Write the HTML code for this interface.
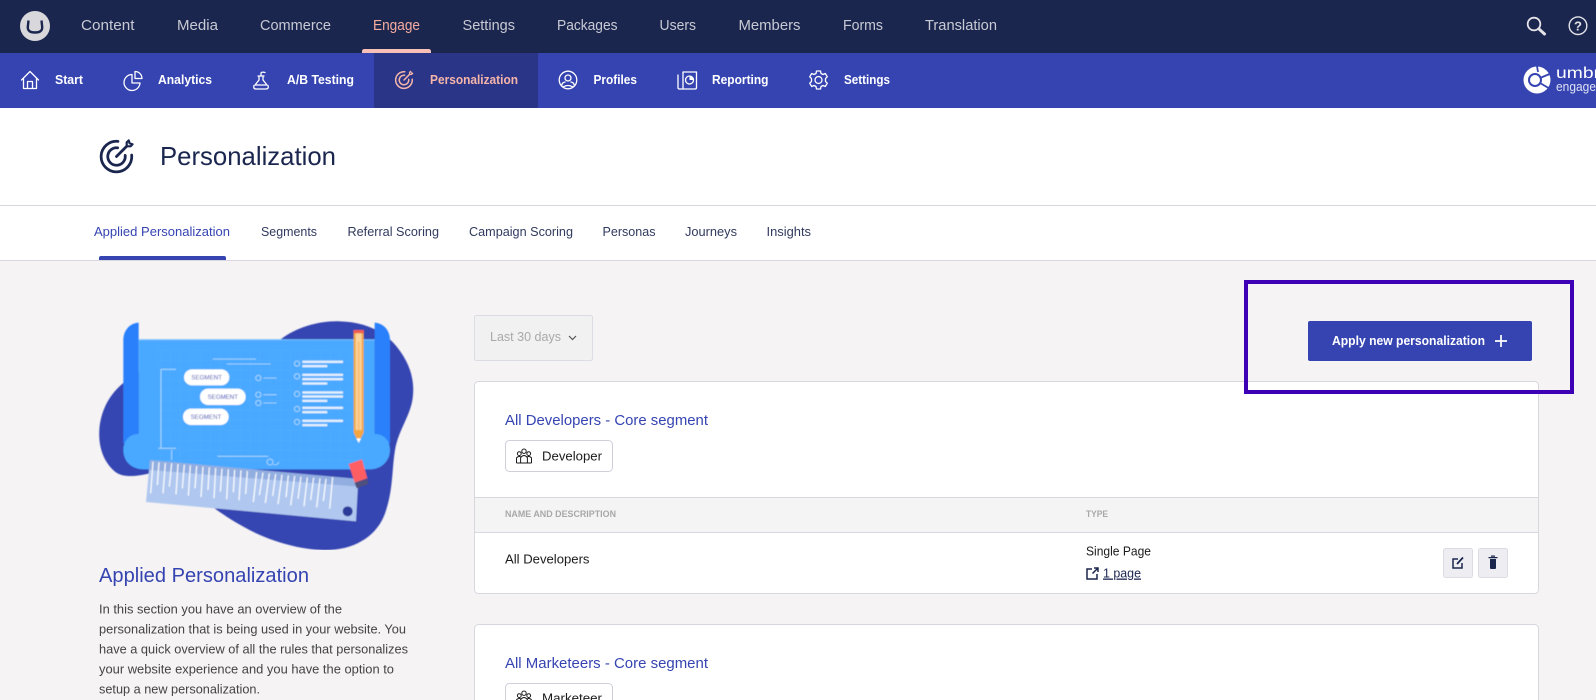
<!DOCTYPE html>
<html lang="en"><head><meta charset="utf-8"><title>Personalization</title>
<style>
html,body{margin:0;padding:0;width:1596px;height:700px;overflow:hidden;background:#f5f3f4}
svg{display:block}
text{font-family:"Liberation Sans",sans-serif}
.t{font-size:15px;fill:#c8cad3}
.s{font-size:13px;font-weight:700;fill:#fff}
.tab{font-size:13px;fill:#303a5e}
.p{font-size:13px;fill:#444}
.i{fill:none;stroke:#fff;stroke-width:1.300;stroke-linecap:round;stroke-linejoin:round}
</style></head><body>
<svg width="1596" height="700" viewBox="0 0 1596 700" xmlns="http://www.w3.org/2000/svg">
<defs>
<symbol id="target" viewBox="0 0 24 24"><g fill="none" stroke="currentColor" stroke-width="1.900" stroke-linecap="round" stroke-linejoin="round"><path d="M13 1.600A10.500 10.500 0 1 0 22.400 11"/><path d="M12.800 6.050A6 6 0 1 0 17.950 11.200"/><path d="M12 12 19 5"/><path d="M19 5V2.300L20.400 1 21 3 23 3.600 21.700 5Z" stroke-width="1.500"/></g></symbol>
<symbol id="people" viewBox="0 0 16 16"><g fill="none" stroke="#1b1b1b" stroke-width="1"><circle cx="8" cy="3.200" r="2.200"/><circle cx="3.300" cy="5.600" r="1.900"/><circle cx="12.700" cy="5.600" r="1.900"/><path d="M4.600 15V9.500Q8 5.500 11.400 9.500V15"/><path d="M.5 15V10Q1.500 8 4.600 8.600M15.500 15V10Q14.500 8 11.400 8.600M.5 15H15.500"/></g></symbol>
<pattern id="grid" width="30" height="30" patternUnits="userSpaceOnUse"><path d="M30 0H0V30" fill="none" stroke="#fff" stroke-opacity=".08" stroke-width="2"/></pattern>
<filter id="soft" x="-2%" y="-2%" width="104%" height="104%"><feGaussianBlur stdDeviation="1.500"/></filter>
</defs>

<!-- top nav -->
<rect width="1596" height="53" fill="#1b264f"/>
<circle cx="35" cy="26" r="15" fill="#d8d7dc"/>
<path d="M28.500 20.500 27.800 27Q27.500 32.500 35 32.500T42.200 27L41.500 20.500" fill="none" stroke="#1b264f" stroke-width="2.400"/>
<text class="t" x="81" y="30" textLength="53.500" lengthAdjust="spacingAndGlyphs">Content</text>
<text class="t" x="177" y="30" textLength="41" lengthAdjust="spacingAndGlyphs">Media</text>
<text class="t" x="260" y="30" textLength="71" lengthAdjust="spacingAndGlyphs">Commerce</text>
<text class="t" x="373" y="30" textLength="47" lengthAdjust="spacingAndGlyphs" style="fill:#f6ac9f">Engage</text>
<text class="t" x="462.500" y="30" textLength="52.500" lengthAdjust="spacingAndGlyphs">Settings</text>
<text class="t" x="557" y="30" textLength="60.500" lengthAdjust="spacingAndGlyphs">Packages</text>
<text class="t" x="659.500" y="30" textLength="36.500" lengthAdjust="spacingAndGlyphs">Users</text>
<text class="t" x="738.500" y="30" textLength="62" lengthAdjust="spacingAndGlyphs">Members</text>
<text class="t" x="843" y="30" textLength="40" lengthAdjust="spacingAndGlyphs">Forms</text>
<text class="t" x="925" y="30" textLength="72" lengthAdjust="spacingAndGlyphs">Translation</text>
<path d="M362 53V51.500Q362 49 364.500 49H428.500Q431 49 431 51.500V53Z" fill="#f9c0b8"/>
<g fill="none" stroke="#e3e3e8"><circle cx="1534" cy="24" r="6.300" stroke-width="1.800"/><path d="M1538.800 28.800 1544.500 34" stroke-width="3" stroke-linecap="round"/><circle cx="1578" cy="25.700" r="8.800" stroke-width="1.400"/></g>
<text x="1578" y="30.500" text-anchor="middle" style="font-size:13px;font-weight:700;fill:#e3e3e8">?</text>

<!-- sub nav -->
<rect y="53" width="1596" height="55" fill="#3544b1"/>
<rect x="374" y="53" width="164" height="55" fill="#2a3587"/>
<path class="i" d="M21.500 80 30 71.500 38.500 80M23.500 78.500V88.500H36.500V78.500M27.500 88.500V81.500H32.500V88.500"/>
<text class="s" x="55" y="84" textLength="28" lengthAdjust="spacingAndGlyphs">Start</text>
<path class="i" d="M132 74.500A8 8 0 1 0 140 83H132ZM135 71.500A7 7 0 0 1 142 78.500H135Z"/>
<text class="s" x="158" y="84" textLength="54" lengthAdjust="spacingAndGlyphs">Analytics</text>
<path class="i" d="M258 76H264M259 76V80L255 85H267L263 80V76M254 85.500Q253 89 256 89H266Q269 89 268 85.500M261 76V73Q262 71.500 265 72.500"/>
<text class="s" x="287" y="84" textLength="67" lengthAdjust="spacingAndGlyphs">A/B Testing</text>
<g color="#f6b5aa"><use href="#target" x="394.500" y="70.500" width="19" height="19" /></g>
<text class="s" x="430" y="84" textLength="88" lengthAdjust="spacingAndGlyphs" style="fill:#f6b5aa">Personalization</text>
<g class="i"><circle cx="568" cy="80" r="8.800"/><circle cx="568" cy="78" r="3"/><path d="M561.500 86Q562 82.500 565 82M574.500 86Q574 82.500 571 82M563 87Q568 84 573 87"/></g>
<text class="s" x="593.500" y="84" textLength="43.500" lengthAdjust="spacingAndGlyphs">Profiles</text>
<g class="i"><path d="M678 75V87.500Q678 89 679.500 89H695Q696.500 89 696.500 87.500V72H683V88"/><circle cx="689.500" cy="80" r="4"/></g>
<path d="M689.500 76V80H693.500A4 4 0 0 0 689.500 76Z" fill="#fff"/>
<text class="s" x="712" y="84" textLength="56.500" lengthAdjust="spacingAndGlyphs">Reporting</text>
<g class="i"><circle cx="818.500" cy="80" r="3.500"/><path d="M816.500 71H820.500L821 73.500 823 74.500 825.300 73.500 827.300 76.800 825.500 78.500V81.500L827.300 83.200 825.300 86.500 823 85.500 821 86.500 820.500 89H816.500L816 86.500 814 85.500 811.700 86.500 809.700 83.200 811.500 81.500V78.500L809.700 76.800 811.700 73.500 814 74.500 816 73.500Z"/></g>
<text class="s" x="844" y="84" textLength="46" lengthAdjust="spacingAndGlyphs">Settings</text>
<circle cx="1537" cy="80" r="13.500" fill="#fff"/>
<circle cx="1535" cy="80" r="6" fill="none" stroke="#3544b1" stroke-width="2"/>
<path d="M1540 78 1552 73M1540 83 1552 90M1537 66 1538 72" stroke="#3544b1" stroke-width="1.800"/>
<text x="1556" y="78" textLength="44" lengthAdjust="spacingAndGlyphs" style="font-size:16px;fill:#fff">umbr</text>
<text x="1556" y="91" textLength="40" lengthAdjust="spacingAndGlyphs" style="font-size:13px;fill:#dfe2f5">engage</text>

<!-- page header -->
<rect y="108" width="1596" height="97" fill="#fff"/>
<rect y="205" width="1596" height="1" fill="#d8d7e0"/>
<use href="#target" x="99" y="139" width="35" height="35" style="color:#1b264f"/>
<text x="160" y="165" textLength="176" lengthAdjust="spacingAndGlyphs" style="font-size:26px;fill:#1b264f">Personalization</text>

<!-- tabs -->
<rect y="206" width="1596" height="54" fill="#fff"/>
<rect y="260" width="1596" height="1" fill="#d8d7e0"/>
<text class="tab" x="94" y="236" textLength="136" lengthAdjust="spacingAndGlyphs" style="fill:#3544b1">Applied Personalization</text>
<text class="tab" x="261" y="236" textLength="56" lengthAdjust="spacingAndGlyphs">Segments</text>
<text class="tab" x="347.500" y="236" textLength="91.500" lengthAdjust="spacingAndGlyphs">Referral Scoring</text>
<text class="tab" x="469" y="236" textLength="104" lengthAdjust="spacingAndGlyphs">Campaign Scoring</text>
<text class="tab" x="602.500" y="236" textLength="53" lengthAdjust="spacingAndGlyphs">Personas</text>
<text class="tab" x="685" y="236" textLength="52" lengthAdjust="spacingAndGlyphs">Journeys</text>
<text class="tab" x="766.500" y="236" textLength="44.500" lengthAdjust="spacingAndGlyphs">Insights</text>
<path d="M99 260V258Q99 256 101 256H224Q226 256 226 258V260Z" fill="#3544b1"/>

<!-- illustration -->
<svg x="80" y="310" width="350" height="240" viewBox="0 0 1050 720">
<g filter="url(#soft)">
<path fill="#3544b1" d="M600 90C650 50 720 32 780 34C850 36 910 60 950 110C990 160 1005 210 998 265C990 320 955 360 945 420C935 480 940 540 915 610C890 680 820 722 730 720C650 718 560 690 490 650C440 622 410 600 370 570L210 490C170 498 130 505 105 485C70 455 55 410 58 360C62 300 90 250 135 215L300 100Z"/>
<path fill="#2a80fb" d="M176 38C150 40 130 60 130 90V400H176ZM884 38C910 40 930 60 930 90V400H884Z"/>
<rect x="176" y="88" width="708" height="300" fill="#4aa8ff"/>
<rect x="176" y="88" width="708" height="3" fill="#7cc2ff"/>
<path fill="#4aa8ff" d="M176 372H884C912 372 930 392 930 420C930 452 905 478 870 478H190C155 478 130 455 130 420C130 392 148 372 176 372Z"/>
<rect x="228" y="112" width="625" height="345" fill="url(#grid)"/>
<g stroke="#dff0ff" stroke-opacity=".75" stroke-width="2.500" fill="none">
<path d="M398 147H528M440 162H572M243 178V414M243 178H288M235 415H288M275 420V450M412 439H565M550 204H590M550 254H590M550 279H590"/>
<circle cx="535" cy="204" r="8"/><circle cx="535" cy="254" r="8"/><circle cx="535" cy="279" r="8"/><circle cx="651" cy="161" r="8"/><circle cx="651" cy="199" r="8"/><circle cx="651" cy="252" r="8"/><circle cx="651" cy="297" r="8"/><circle cx="651" cy="336" r="8"/><circle cx="570" cy="456" r="9"/><path d="M580 465Q595 465 596 456"/>
</g>
<g fill="#e6f0fd"><rect x="667" y="152" width="122" height="7"/><rect x="667" y="165" width="75" height="7"/><rect x="667" y="191" width="122" height="7"/><rect x="667" y="204" width="122" height="7"/><rect x="667" y="217" width="75" height="7"/><rect x="667" y="244" width="122" height="7"/><rect x="667" y="256" width="122" height="7"/><rect x="667" y="269" width="75" height="7"/><rect x="667" y="290" width="122" height="7"/><rect x="667" y="303" width="75" height="7"/><rect x="667" y="329" width="122" height="7"/><rect x="667" y="342" width="75" height="7"/></g>
<g fill="#fff"><rect x="312" y="178" width="136" height="48" rx="24"/><rect x="360" y="236" width="137" height="49" rx="24"/><rect x="309" y="296" width="137" height="49" rx="24"/></g>
<g fill="#3544b1" style="font-size:19px"><text x="334" y="208" textLength="92" lengthAdjust="spacingAndGlyphs">SEGMENT</text><text x="383" y="267" textLength="91" lengthAdjust="spacingAndGlyphs">SEGMENT</text><text x="332" y="327" textLength="92" lengthAdjust="spacingAndGlyphs">SEGMENT</text></g>
<path fill="#f4a63f" d="M821 60H851V368L836 398 821 368Z"/>
<rect x="821" y="60" width="30" height="10" fill="#f05d50"/>
<rect x="827" y="70" width="18" height="290" fill="#fbd29a"/>
<rect x="834" y="95" width="4" height="265" fill="#f4a63f" opacity=".6"/>
<path fill="#fff" d="M829 385H843L836 399Z"/>
<path fill="#b0c8f0" d="M210 450 835 507 828 634 198 576Z"/>
<path fill="#86a3d8" d="M210 450 835 507 833 530 208 480Z" opacity=".7"/>
<g stroke="#fff" stroke-width="3.500"><path d="M219 455 212 550M237 457 232 525M256 459 249 550M275 460 268 530M294 462 288 553M313 464 307 535M331 466 325 557M350 468 345 535M369 470 363 561M388 472 384 540M407 474 402 565M426 476 421 545M445 478 440 568M464 480 460 547M483 481 477 571M502 483 497 552M530 486 520 576M549 488 538 555M568 490 556 579M587 492 578 558M606 494 594 583M625 496 618 562M644 498 632 586M663 500 654 566M682 502 672 589M701 503 692 570M720 505 710 592M738 507 730 573M758 502 749 596"/></g>
<circle cx="803" cy="604" r="15" fill="#2c3a99"/>
<path fill="#ff5f63" d="M806 462 846 448 862 505 824 518Z"/>
<path fill="#4e4f7e" d="M824 518 861 505 866 522 830 535Z"/>
</g>
</svg>

<!-- left copy -->
<text x="99" y="582" textLength="210" lengthAdjust="spacingAndGlyphs" style="font-size:20px;fill:#3544b1">Applied Personalization</text>
<text class="p" x="99" y="613.500" textLength="243" lengthAdjust="spacingAndGlyphs">In this section you have an overview of the</text>
<text class="p" x="99" y="633.500" textLength="307" lengthAdjust="spacingAndGlyphs">personalization that is being used in your website. You</text>
<text class="p" x="99" y="653.500" textLength="309" lengthAdjust="spacingAndGlyphs">have a quick overview of all the rules that personalizes</text>
<text class="p" x="99" y="673.500" textLength="295" lengthAdjust="spacingAndGlyphs">your website experience and you have the option to</text>
<text class="p" x="99" y="693.500" textLength="161" lengthAdjust="spacingAndGlyphs">setup a new personalization.</text>

<!-- filter -->
<rect x="474.500" y="315.500" width="118" height="45" rx="2" fill="#f1f1f2" stroke="#dcdce3"/>
<text x="490" y="341" textLength="71" lengthAdjust="spacingAndGlyphs" style="font-size:13px;fill:#a9a9a9">Last 30 days</text>
<path d="M569 336 572.500 339.500 576 336" fill="none" stroke="#555" stroke-width="1.200"/>

<!-- button -->
<rect x="1308" y="321" width="224" height="40" rx="2" fill="#3544b1"/>
<text class="s" x="1332" y="345" textLength="153" lengthAdjust="spacingAndGlyphs">Apply new personalization</text>
<path d="M1501 335V347M1495 341H1507" stroke="#fff" stroke-width="1.700"/>

<!-- card 1 -->
<rect x="474.500" y="381.500" width="1064" height="212" rx="4" fill="#fff" stroke="#d8d7e0"/>
<text x="505" y="425" textLength="203" lengthAdjust="spacingAndGlyphs" style="font-size:15px;fill:#3544b1">All Developers - Core segment</text>
<rect x="505.500" y="440.500" width="107" height="31" rx="4" fill="#fff" stroke="#cfd0da"/>
<use href="#people" x="516" y="448" width="16" height="16"/>
<text x="542" y="460.500" textLength="60" lengthAdjust="spacingAndGlyphs" style="font-size:13px;fill:#1b1b1b">Developer</text>
<rect x="475" y="497" width="1063" height="35" fill="#f5f4f5"/>
<path d="M475 497.500H1538M475 532.500H1538" stroke="#d8d7e0"/>
<text x="505" y="517" textLength="111" lengthAdjust="spacingAndGlyphs" style="font-size:9.500px;font-weight:700;fill:#a8a8a8">NAME AND DESCRIPTION</text>
<text x="1086" y="517" textLength="22" lengthAdjust="spacingAndGlyphs" style="font-size:9.500px;font-weight:700;fill:#a8a8a8">TYPE</text>
<text x="505" y="563.500" textLength="84.500" lengthAdjust="spacingAndGlyphs" style="font-size:13px;fill:#1b1b1b">All Developers</text>
<text x="1086" y="555.500" textLength="65" lengthAdjust="spacingAndGlyphs" style="font-size:13px;fill:#1b1b1b">Single Page</text>
<path d="M1092 569H1087V579H1097V574M1092.500 573.500 1097.500 568.500M1094 568H1098V572" fill="none" stroke="#1b264f" stroke-width="1.500"/>
<text x="1103" y="577.500" textLength="38" lengthAdjust="spacingAndGlyphs" style="font-size:13px;fill:#1b264f;text-decoration:underline">1 page</text>
<rect x="1443.500" y="548.500" width="29" height="29" rx="2" fill="#eeeef2" stroke="#dcdce3"/>
<rect x="1478.500" y="548.500" width="29" height="29" rx="2" fill="#eeeef2" stroke="#dcdce3"/>
<path d="M1458 559H1453V568H1462V563" fill="none" stroke="#1b264f" stroke-width="1.500"/>
<path d="M1457 564 1463 557.500" stroke="#1b264f" stroke-width="1.800"/>
<path d="M1490 559H1496V568Q1496 569 1495 569H1491Q1490 569 1490 568ZM1488.500 557H1497.500V558.300H1488.500ZM1491 555.500H1495V556.800H1491Z" fill="#1b264f"/>

<!-- card 2 -->
<rect x="474.500" y="624.500" width="1064" height="120" rx="4" fill="#fff" stroke="#d8d7e0"/>
<text x="505" y="668" textLength="203" lengthAdjust="spacingAndGlyphs" style="font-size:15px;fill:#3544b1">All Marketeers - Core segment</text>
<rect x="505.500" y="683.500" width="107" height="31" rx="4" fill="#fff" stroke="#cfd0da"/>
<use href="#people" x="516" y="690" width="16" height="16"/>
<text x="542" y="702.500" textLength="60" lengthAdjust="spacingAndGlyphs" style="font-size:13px;fill:#1b1b1b">Marketeer</text>

<!-- annotation -->
<path d="M1572 282H1246V392H1572Z" fill="none" stroke="#3d00b5" stroke-width="4"/>
</svg>
</body></html>
